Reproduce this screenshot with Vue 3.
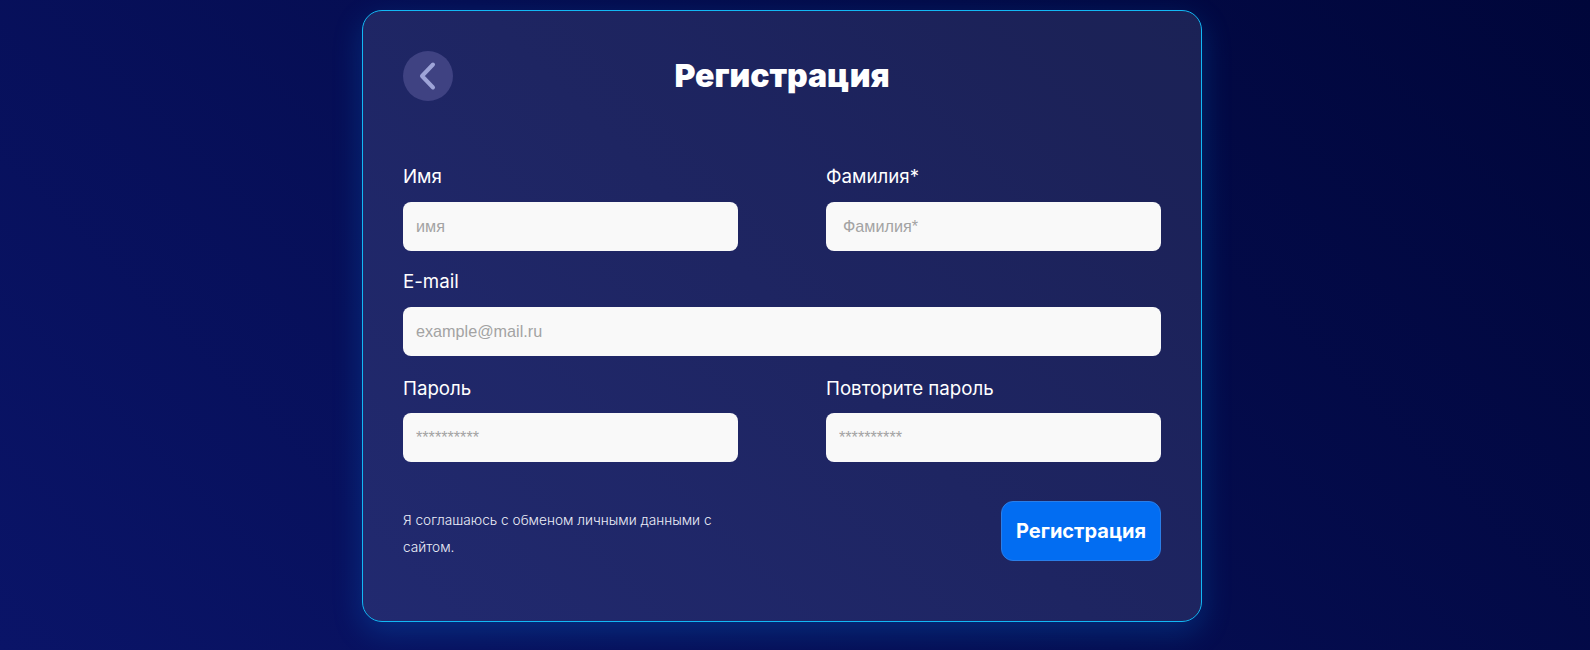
<template>
  <div class="page">
    <div class="card">
      <div class="card-header">
        <button class="back-btn" type="button" aria-label="Назад">
          <svg width="24" height="30" viewBox="0 0 24 30" fill="none">
            <path d="M17 3.5 L6 15 L17 26.5" stroke="#9ea4d8" stroke-width="4" stroke-linecap="round" stroke-linejoin="round" />
          </svg>
        </button>
        <h1 class="title">Регистрация</h1>
      </div>

      <form class="form" @submit.prevent>
        <div class="field">
          <label class="label">Имя</label>
          <input v-model="form.name" class="input" type="text" placeholder="имя" />
        </div>
        <div class="field">
          <label class="label">Фамилия*</label>
          <input v-model="form.surname" class="input input-wide" type="text" placeholder="Фамилия*" />
        </div>
        <div class="field full">
          <label class="label">E-mail</label>
          <input v-model="form.email" class="input" type="text" placeholder="example@mail.ru" />
        </div>
        <div class="field">
          <label class="label label-low">Пароль</label>
          <input v-model="form.password" class="input" type="text" placeholder="**********" />
        </div>
        <div class="field">
          <label class="label label-low">Повторите пароль</label>
          <input v-model="form.repeat" class="input" type="text" placeholder="**********" />
        </div>
      </form>

      <div class="card-footer">
        <p class="agree">Я соглашаюсь с обменом личными данными с сайтом.</p>
        <button class="submit-btn" type="button">Регистрация</button>
      </div>
    </div>
  </div>
</template>

<script setup>
import { reactive } from 'vue';

const form = reactive({
  name: '',
  surname: '',
  email: '',
  password: '',
  repeat: '',
});
</script>

<style>
html,
body {
  margin: 0;
  background: #040f55;
}
</style>

<style scoped>
.page {
  box-sizing: border-box;
  height: 650px;
  padding: 10px 26px 0 0;
  display: flex;
  justify-content: center;
  overflow: hidden;
  background: linear-gradient(45deg, #0a1468 0%, #00063a 100%);
}

.card {
  box-sizing: border-box;
  width: 840px;
  height: 612px;
  padding: 40px;
  border: 1px solid #12b8f5;
  border-radius: 20px;
  background: rgba(255, 255, 255, 0.1);
  box-shadow: 0 10px 30px rgba(0, 150, 255, 0.22);
  font-family: Inter, "Liberation Sans", sans-serif;
  color: #fff;
}

.card-header {
  display: flex;
  align-items: center;
  position: relative;
  height: 50px;
}

.back-btn {
  width: 50px;
  height: 50px;
  padding: 0;
  border: none;
  border-radius: 50%;
  background: #3f4282;
  display: flex;
  align-items: center;
  justify-content: center;
}

.title {
  position: absolute;
  left: 0;
  right: 0;
  margin: 0;
  text-align: center;
  font-family: Inter, sans-serif;
  font-size: 32px;
  font-weight: 900;
  line-height: 48px;
}

.form {
  margin-top: 61px;
  display: grid;
  grid-template-columns: 335px 335px;
  justify-content: space-between;
  row-gap: 16px;
}

.field {
  display: flex;
  flex-direction: column;
}

.full {
  grid-column: 1 / 3;
  margin-bottom: 2px;
}

.label {
  font-size: 18.72px;
  line-height: 30px;
  margin-bottom: 10px;
}

.label-low {
  margin-bottom: 9px;
}

.input {
  box-sizing: border-box;
  height: 49px;
  padding: 0 13px;
  border: none;
  border-radius: 8px;
  outline: none;
  background: #f9f9f9;
  font-family: "Liberation Sans", sans-serif;
  font-size: 16.2px;
}

.input::placeholder {
  color: #a3a3a3;
}

.input-wide {
  padding-left: 17px;
}

.card-footer {
  margin-top: 39px;
  display: flex;
  justify-content: space-between;
  align-items: flex-start;
}

.agree {
  width: 320px;
  margin: 0;
  padding-top: 5.5px;
  font-size: 13.65px;
  font-weight: 300;
  line-height: 27.5px;
  color: #eceef8;
}

.submit-btn {
  box-sizing: border-box;
  width: 160px;
  height: 60px;
  border: 1px solid #2a7ee8;
  border-radius: 12px;
  background: #026df2;
  color: #fff;
  font-family: Inter, sans-serif;
  font-size: 20px;
  font-weight: 700;
}
</style>
